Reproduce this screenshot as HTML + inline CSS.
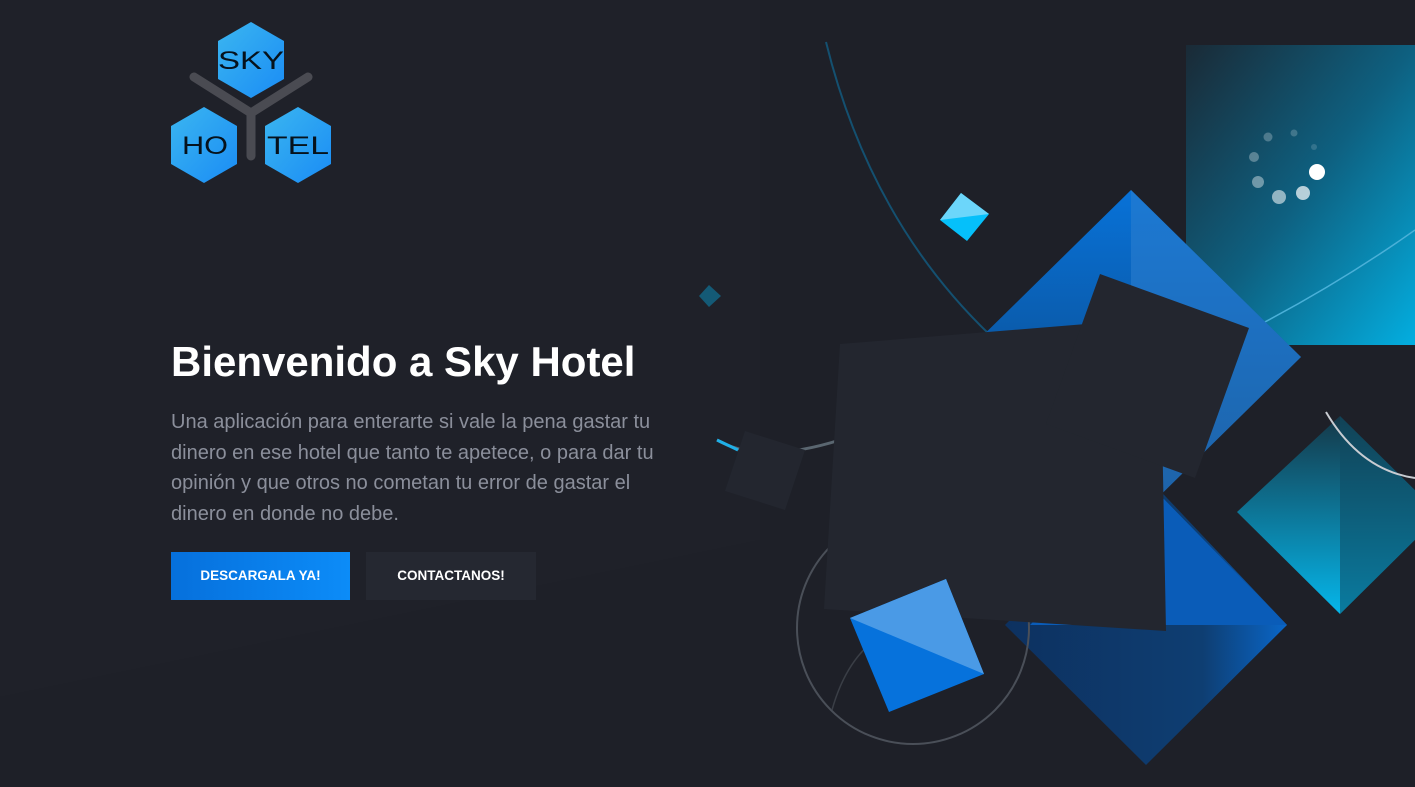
<!DOCTYPE html>
<html><head><meta charset="utf-8"><style>
html,body{margin:0;padding:0}
body{width:1415px;height:787px;overflow:hidden;background:#1e2028;font-family:"Liberation Sans",sans-serif;position:relative}
svg{position:absolute;left:0;top:0}
h1{position:absolute;left:171px;top:338px;margin:0;font-size:42px;font-weight:bold;color:#fff}
p{position:absolute;left:171px;top:407px;margin:0;font-size:20px;line-height:30.5px;color:#8b8f9b;white-space:nowrap}
.b{position:absolute;top:552px;height:48px;line-height:48px;text-align:center;color:#fff;font-weight:bold;font-size:13.5px}
</style></head><body>
<svg width="1415" height="787" viewBox="0 0 1415 787">
<defs>
<linearGradient id="teal" x1="0" y1="0" x2="1" y2="1"><stop offset="0" stop-color="#1a2a36"/><stop offset="0.5" stop-color="#0e6080"/><stop offset="1" stop-color="#03aee0"/></linearGradient>
<linearGradient id="bl1" x1="0" y1="0" x2="0" y2="1"><stop offset="0" stop-color="#0872d8"/><stop offset="1" stop-color="#0d3e72"/></linearGradient>
<linearGradient id="bl2" x1="0" y1="0" x2="1" y2="0"><stop offset="0" stop-color="#0d3160"/><stop offset="0.7" stop-color="#0e3e72"/><stop offset="1" stop-color="#0a66c8"/></linearGradient>
<linearGradient id="td" x1="0" y1="0" x2="0" y2="1"><stop offset="0" stop-color="#153848"/><stop offset="1" stop-color="#05b6ea"/></linearGradient>
<linearGradient id="hx" x1="0" y1="0" x2="1" y2="1"><stop offset="0" stop-color="#3bb6f0"/><stop offset="1" stop-color="#1a8cf5"/></linearGradient>
</defs>
<polygon points="0,697 0,0 760,0 760,540" fill="#20222a" opacity="0.5"/>
<rect x="1186" y="45" width="229" height="300" fill="url(#teal)"/>
<path d="M826 42 Q870 220 990 335" stroke="#145070" stroke-width="2" fill="none"/>
<path d="M1230 340 Q1330 290 1415 230" stroke="#4ab0d8" stroke-width="1.5" fill="none"/>
<polygon points="1131,190 1301,357 1131,524 961,357" fill="url(#bl1)"/>
<polygon points="1131,190 1301,357 1131,524" fill="#2e7fd0" opacity="0.55"/>
<polygon points="1150,480 1287,625 1146,765 1005,625" fill="url(#bl2)"/>
<polygon points="1160,495 1287,625 1030,625" fill="#0a5cb8"/>
<polygon points="1340,416 1440,515 1340,614 1237,512" fill="url(#td)"/>
<polygon points="1340,416 1440,515 1340,614" fill="#0f4a62" opacity="0.55"/>
<path d="M1326 412 Q1360 470 1415 478" stroke="#c8ccd2" stroke-width="2" fill="none"/>
<circle cx="913" cy="628" r="116" stroke="#4a4f58" stroke-width="2" fill="none"/>
<path d="M832 710 Q860 610 960 620" stroke="#3a3e46" stroke-width="1.5" fill="none"/>
<path d="M717 440 Q760 465 840 440" stroke="#5a6670" stroke-width="3" fill="none"/>
<path d="M717 440 L738 450" stroke="#1fb0e8" stroke-width="3"/>
<polygon points="840,344 1160,318 1166,631 824,609" fill="#23262f"/>
<polygon points="1100,274 1249,328 1195,478 1046,424" fill="#23262f"/>
<polygon points="745,431 805,450 785,510 725,491" fill="#23262f"/>
<polygon points="946,579 984,674 889,712 850,618" fill="#0672dc"/>
<polygon points="946,579 984,674 850,618" fill="#4a9ae6"/>
<polygon points="961,193 989,214 967,241 940,220" fill="#05c0fa"/>
<polygon points="961,193 989,214 940,220" fill="#6cd6fa"/>
<polygon points="709,285 721,296 709,307 699,296" fill="#145a76"/>
<g fill="#fff">
<circle cx="1317" cy="172" r="8"/>
<circle cx="1303" cy="193" r="7" opacity="0.7"/>
<circle cx="1279" cy="197" r="7" opacity="0.55"/>
<circle cx="1258" cy="182" r="6" opacity="0.4"/>
<circle cx="1254" cy="157" r="5" opacity="0.3"/>
<circle cx="1268" cy="137" r="4.5" opacity="0.25"/>
<circle cx="1294" cy="133" r="3.5" opacity="0.2"/>
<circle cx="1314" cy="147" r="3" opacity="0.15"/>
</g>
<g>
<polygon points="251,22 284,41 284,79 251,98 218,79 218,41" fill="url(#hx)"/>
<polygon points="204,107 237,126 237,164 204,183 171,164 171,126" fill="url(#hx)"/>
<polygon points="298,107 331,126 331,164 298,183 265,164 265,126" fill="url(#hx)"/>
<path d="M194 77 L251 113 L308 77 M251 113 L251 156" stroke="#4a4b52" stroke-width="9" stroke-linecap="round" stroke-linejoin="round" fill="none"/>
<g font-family="Liberation Sans" font-size="25" fill="#06121c" text-anchor="middle">
<text x="251" y="69" textLength="66" lengthAdjust="spacingAndGlyphs">SKY</text>
<text x="205" y="154" textLength="46" lengthAdjust="spacingAndGlyphs">HO</text>
<text x="298" y="154" textLength="62" lengthAdjust="spacingAndGlyphs">TEL</text>
</g>
</g>
</svg>
<h1>Bienvenido a Sky Hotel</h1>
<p>Una aplicación para enterarte si vale la pena gastar tu<br>dinero en ese hotel que tanto te apetece, o para dar tu<br>opinión y que otros no cometan tu error de gastar el<br>dinero en donde no debe.</p>
<div class="b" style="left:171px;width:179px;background:linear-gradient(90deg,#0670dc,#0c8cf8)">DESCARGALA YA!</div>
<div class="b" style="left:366px;width:170px;background:#252831">CONTACTANOS!</div>
</body></html>
